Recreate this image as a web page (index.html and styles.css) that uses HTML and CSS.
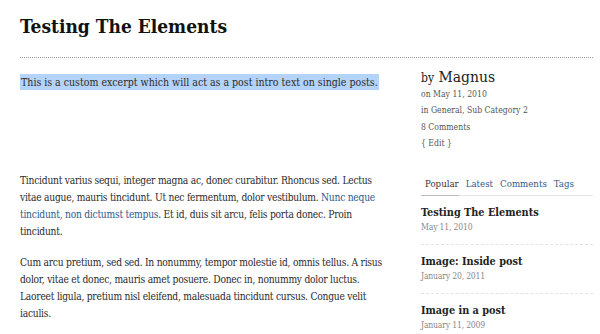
FILE: index.html
```html
<!DOCTYPE html>
<html lang="en">
<head>
  <meta charset="UTF-8">
  <title>Testing The Elements</title>
  <link rel="stylesheet" href="styles.css">
</head>
<body>
  <h1 class="post-title">Testing The Elements</h1>
  <div class="rule"></div>

  <div class="wrap">
    <div class="main">
      <p class="excerpt"><span class="hl">This is a custom excerpt which will act as a post intro text on single posts.</span></p>

      <p>Tincidunt varius sequi, integer magna ac, donec curabitur. Rhoncus sed. Lectus vitae augue, mauris tincidunt. Ut nec fermentum, dolor vestibulum. <a href="#">Nunc neque tincidunt, non dictumst tempus</a>. Et id, duis sit arcu, felis porta donec. Proin tincidunt.</p>

      <p>Cum arcu pretium, sed sed. In nonummy, tempor molestie id, omnis tellus. A risus dolor, vitae et donec, mauris amet posuere. Donec in, nonummy dolor luctus. Laoreet ligula, pretium nisl eleifend, malesuada tincidunt cursus. Congue velit iaculis.</p>
    </div>

    <div class="side">
      <div class="author"><span class="by">by</span> Magnus</div>
      <ul class="meta">
        <li>on May 11, 2010</li>
        <li>in General, Sub Category 2</li>
        <li>8 Comments</li>
        <li>{ Edit }</li>
      </ul>

      <div class="tabs">
        <a href="#" class="tab active">Popular</a>
        <a href="#" class="tab">Latest</a>
        <a href="#" class="tab">Comments</a>
        <a href="#" class="tab">Tags</a>
      </div>

      <ul class="posts">
        <li><strong>Testing The Elements</strong><span>May 11, 2010</span></li>
        <li><strong>Image: Inside post</strong><span>January 20, 2011</span></li>
        <li><strong>Image in a post</strong><span>January 11, 2009</span></li>
      </ul>
    </div>
  </div>
</body>
</html>
```

FILE: styles.css
```css
body { margin: 0; padding: 0 7px 0 20px; font-family: "DejaVu Serif Condensed", "DejaVu Serif", serif; color: #2b2b2b; background: #fff; }
a { color: #2e5b8c; text-decoration: none; }

.post-title { margin: 0; padding-top: 13px; font-size: 19px; line-height: 26px; color: #111; }
.rule { margin-top: 18px; border-top: 1px dotted #999; }

.wrap { display: flex; }
.main { width: 366px; font-size: 10.2px; line-height: 17px; letter-spacing: -0.25px; }
.main p { margin: 0 0 14px; }
.main .excerpt { margin-top: 16px; height: 84px; font-size: 10.5px; letter-spacing: 0; }
.hl { background: #b4d3f9; padding: 2px 1px; }

.side { margin-left: 35px; flex: 1; }
.author { margin-top: 10px; font-size: 15.5px; line-height: 18px; color: #222; }
.by { font-size: 12px; }
.meta { list-style: none; margin: -1px 0 0; padding: 0; font-size: 8.6px; line-height: 16.3px; color: #555; }

.tabs { display: flex; gap: 7px; margin-top: 27px; padding-left: 4px; border-bottom: 1px solid #e6e6e6; font-size: 9.6px; line-height: 12px; }
.tab { padding-bottom: 5px; margin-bottom: -1px; }
.tab.active { color: #333; margin-left: -4px; padding-left: 4px; border-bottom: 1px solid #bbb; }

.posts { list-style: none; margin: 0; padding: 0; }
.posts li { padding: 10px 0 10px; border-bottom: 1px dashed #e4e4e4; }
.posts strong { display: block; font-size: 10.8px; line-height: 14px; color: #222; }
.posts span { display: block; font-size: 8.6px; line-height: 14px; color: #888; letter-spacing: -0.2px; }
```
